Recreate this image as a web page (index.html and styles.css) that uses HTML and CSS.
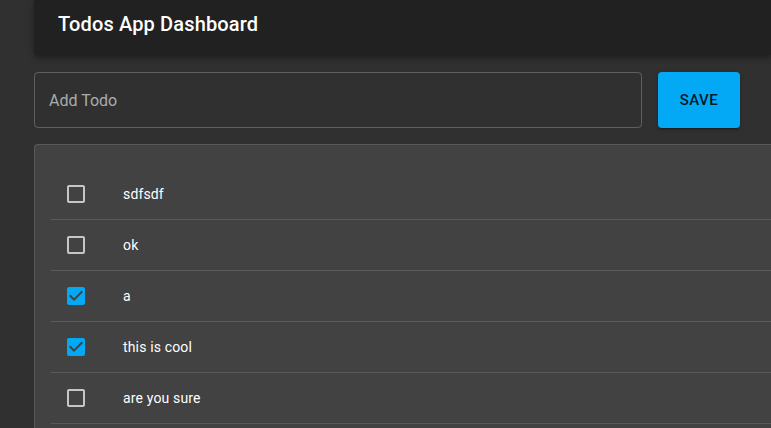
FILE: index.html
```html
<!DOCTYPE html>
<html>
<head>
<meta charset="utf-8">
<link rel="stylesheet" href="styles.css">
</head>
<body>
<div class="app">
  <header class="topbar"><h1 class="title">Todos App Dashboard</h1></header>
  <form class="add-form">
    <input class="add-input" type="text" placeholder="Add Todo">
    <button class="save-btn" type="button">SAVE</button>
  </form>
  <section class="paper">
    <ul class="todo-list">
      <li class="todo">
        <span class="check"><svg viewBox="0 0 24 24" width="24" height="24"><path class="box-off" d="M19 5v14H5V5h14m0-2H5c-1.1 0-2 .9-2 2v14c0 1.1.9 2 2 2h14c1.1 0 2-.9 2-2V5c0-1.1-.9-2-2-2z"/></svg></span>
        <span class="label">sdfsdf</span>
      </li>
      <li class="todo">
        <span class="check"><svg viewBox="0 0 24 24" width="24" height="24"><path class="box-off" d="M19 5v14H5V5h14m0-2H5c-1.1 0-2 .9-2 2v14c0 1.1.9 2 2 2h14c1.1 0 2-.9 2-2V5c0-1.1-.9-2-2-2z"/></svg></span>
        <span class="label">ok</span>
      </li>
      <li class="todo">
        <span class="check"><svg viewBox="0 0 24 24" width="24" height="24"><path class="box-on" d="M19 3H5c-1.11 0-2 .9-2 2v14c0 1.1.89 2 2 2h14c1.11 0 2-.9 2-2V5c0-1.1-.89-2-2-2zm-9 14l-5-5 1.41-1.41L10 14.17l7.59-7.59L19 8l-9 9z"/></svg></span>
        <span class="label">a</span>
      </li>
      <li class="todo">
        <span class="check"><svg viewBox="0 0 24 24" width="24" height="24"><path class="box-on" d="M19 3H5c-1.11 0-2 .9-2 2v14c0 1.1.89 2 2 2h14c1.11 0 2-.9 2-2V5c0-1.1-.89-2-2-2zm-9 14l-5-5 1.41-1.41L10 14.17l7.59-7.59L19 8l-9 9z"/></svg></span>
        <span class="label">this is cool</span>
      </li>
      <li class="todo">
        <span class="check"><svg viewBox="0 0 24 24" width="24" height="24"><path class="box-off" d="M19 5v14H5V5h14m0-2H5c-1.1 0-2 .9-2 2v14c0 1.1.9 2 2 2h14c1.1 0 2-.9 2-2V5c0-1.1-.9-2-2-2z"/></svg></span>
        <span class="label">are you sure</span>
      </li>
    </ul>
  </section>
</div>
</body>
</html>
```
FILE: styles.css
```css
html, body {
  margin: 0;
  padding: 0;
  background: #303030;
  overflow: hidden;
  height: 428px;
}
body {
  font-family: Roboto, "Liberation Sans", sans-serif;
  color: #fff;
}
.app {
  margin-left: 34px;
  width: 737px;
  height: 428px;
  display: flex;
  flex-direction: column;
}
.topbar {
  height: 55px;
  flex: none;
  background: #212121;
  border-bottom-left-radius: 4px;
  box-shadow: 0 2px 4px -1px rgba(0,0,0,0.2), 0 4px 5px 0 rgba(0,0,0,0.14), 0 1px 10px 0 rgba(0,0,0,0.12);
  display: flex;
  align-items: center;
  padding-left: 24px;
  padding-bottom: 8px;
  box-sizing: border-box;
}
.title {
  margin: 0;
  font-size: 20px;
  font-weight: 500;
  letter-spacing: 0.15px;
  color: #fff;
}
.add-form {
  flex: none;
  margin: 17px 0 0 0;
  display: flex;
  gap: 16px;
}
.add-input {
  width: 608px;
  height: 56px;
  box-sizing: border-box;
  background: transparent;
  border: 1px solid rgba(255,255,255,0.23);
  border-radius: 4px;
  padding: 0 14px;
  font-family: Roboto, "Liberation Sans", sans-serif;
  font-size: 16px;
  color: #fff;
  outline: none;
}
.add-input::placeholder {
  color: rgba(255,255,255,0.6);
  opacity: 1;
}
.save-btn {
  width: 82px;
  height: 56px;
  border: none;
  border-radius: 4px;
  background: #03a9f4;
  color: rgba(0,0,0,0.87);
  font-family: Roboto, "Liberation Sans", sans-serif;
  font-size: 15px;
  font-weight: 500;
  letter-spacing: 0.46px;
  box-shadow: 0 3px 1px -2px rgba(0,0,0,0.2), 0 2px 2px 0 rgba(0,0,0,0.14), 0 1px 5px 0 rgba(0,0,0,0.12);
  padding: 0;
}
.paper {
  flex: 1;
  min-height: 0;
  margin-top: 16px;
  background: #424242;
  border-top: 1px solid rgba(255,255,255,0.12);
  border-left: 1px solid rgba(255,255,255,0.12);
  border-top-left-radius: 4px;
  padding: 16px 0 0 16px;
  overflow: hidden;
}
.todo-list {
  list-style: none;
  margin: 0;
  padding: 8px 0 0 0;
}
.todo {
  height: 50px;
  border-bottom: 1px solid rgba(255,255,255,0.12);
  display: flex;
  align-items: center;
  padding-left: 13px;
}
.check {
  width: 24px;
  height: 24px;
  display: flex;
}
.box-off {
  fill: rgba(255,255,255,0.7);
}
.box-on {
  fill: #03a9f4;
}
.label {
  margin-left: 35px;
  font-size: 14px;
  letter-spacing: 0.15px;
  color: #fff;
}
```
